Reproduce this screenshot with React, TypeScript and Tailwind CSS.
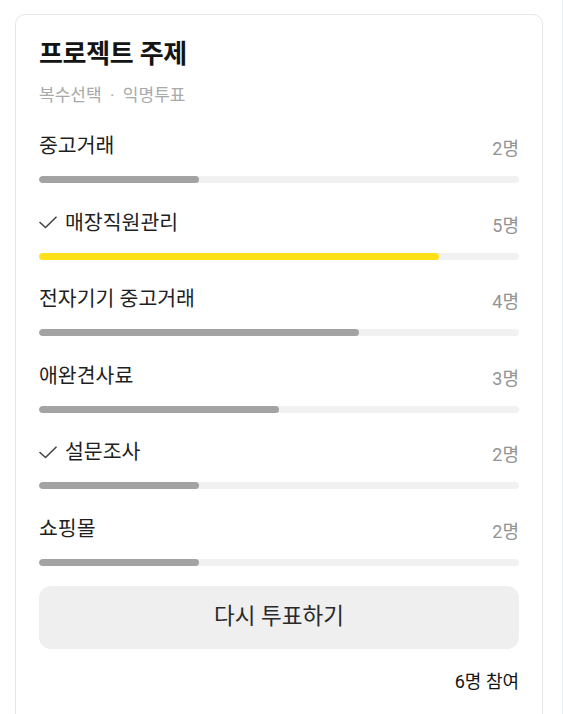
import { Fragment } from "react";

const total = 6;

const options = [
  { label: "중고거래", count: 2, voted: false, mine: false },
  { label: "매장직원관리", count: 5, voted: true, mine: true },
  { label: "전자기기 중고거래", count: 4, voted: false, mine: false },
  { label: "애완견사료", count: 3, voted: false, mine: false },
  { label: "설문조사", count: 2, voted: true, mine: false },
  { label: "쇼핑몰", count: 2, voted: false, mine: false },
];

const CheckMark = () => (
  <svg width="18" height="13" viewBox="0 0 18 13" fill="none" className="shrink-0">
    <polyline points="1,6.5 6.5,11.5 17,1.2" stroke="#444" strokeWidth="1.6" strokeLinecap="round" strokeLinejoin="round" />
  </svg>
);

const App = () => {
  return (
    <div className="flex bg-white min-h-[714px] font-['Roboto','Noto_Sans_CJK_KR',sans-serif]">
      <div className="w-[562px] pl-[15px] pr-[19px] pt-[14px]">
        {/* Poll card */}
        <div className="border border-[#e6e6e6] rounded-[10px] px-[23px] pt-[21px] pb-[40px] min-h-[720px]">
          <h1 className="text-[26px] leading-[36px] font-bold text-[#141414] tracking-[-0.3px]">프로젝트 주제</h1>
          <p className="mt-[12px] text-[17px] leading-[22px] text-[#a9a9a9] whitespace-pre">복수선택  ·  익명투표</p>

          <div className="mt-[24px]">
            {options.map((o, i) => (
              <Fragment key={o.label}>
                <div className={i === 0 ? "" : "mt-[23.5px]"}>
                  <div className="flex items-end justify-between h-[30px]">
                    <div className="flex items-center gap-[8px] text-[20.5px] leading-[28px] text-[#1f1f1f]">
                      {o.voted && <CheckMark />}
                      <span>{o.label}</span>
                    </div>
                    <span className="text-[18px] leading-[24px] text-[#939393] -mb-[1px]">{o.count}명</span>
                  </div>
                  <div className="mt-[16px] h-[7px] rounded-full bg-[#f1f1f1] overflow-hidden">
                    <div
                      className={o.mine ? "h-full rounded-full bg-[#ffe11a]" : "h-full rounded-full bg-[#a3a3a3]"}
                      style={{ width: `${(o.count / total) * 100}%` }}
                    />
                  </div>
                </div>
              </Fragment>
            ))}
          </div>

          <button className="mt-[20px] w-full h-[63px] rounded-[12px] bg-[#efefef] text-[22.5px] text-[#2a2a2a]">
            다시 투표하기
          </button>

          <p className="mt-[21px] text-right text-[18px] leading-[24px] text-[#151515]">6명 참여</p>
        </div>
      </div>
      <div className="w-px bg-[#e9eef6]" />
    </div>
  );
};

export default App;
